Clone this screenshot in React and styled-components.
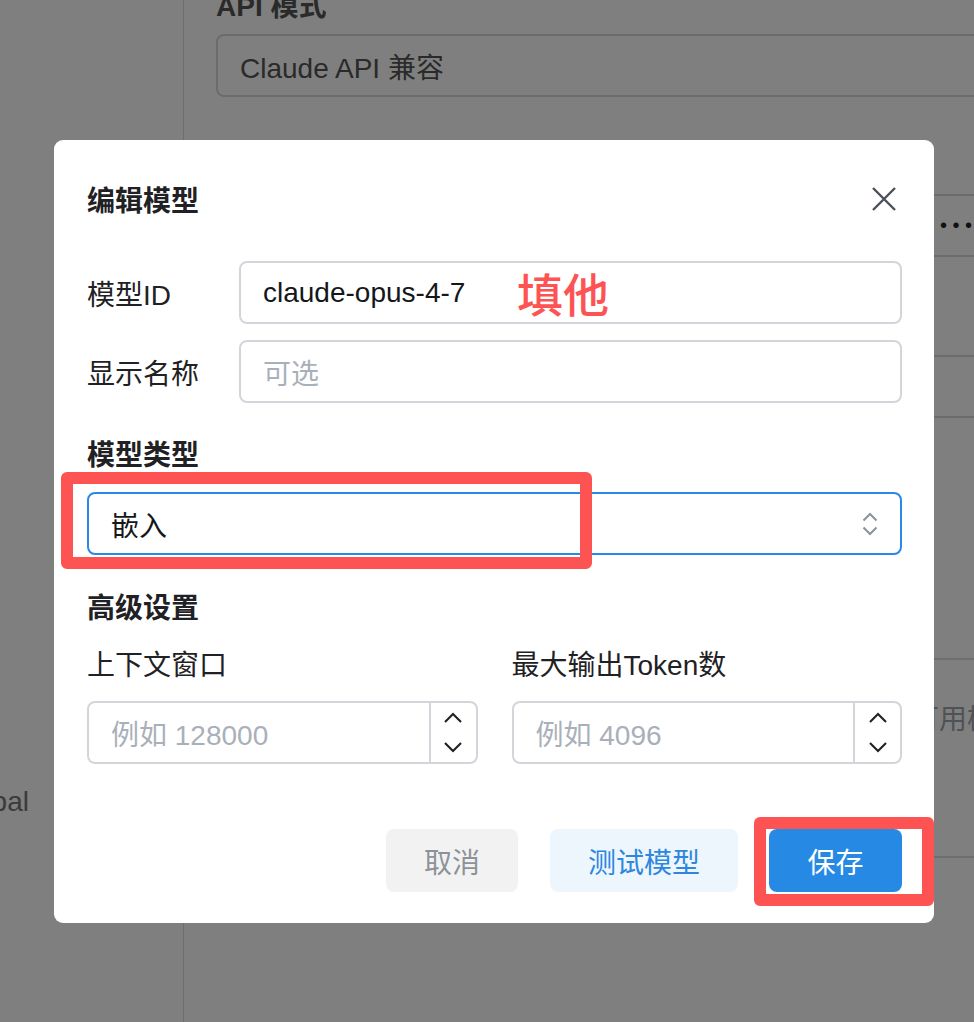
import React from 'react'
import styled, { createGlobalStyle } from 'styled-components'

const GlobalStyle = createGlobalStyle`
  html, body {
    margin: 0;
    padding: 0;
    height: 100%;
    overflow: hidden;
    background: #ffffff;
    font-family: 'Liberation Sans', 'Noto Sans CJK SC', sans-serif;
    color: #1f2124;
  }
  * {
    box-sizing: border-box;
  }
`

// settings page behind the modal
const Page = styled.div`
  display: grid;
  grid-template-columns: 184px 1fr;
  height: 1022px;
  overflow: hidden;
`
const Sidebar = styled.nav`
  border-right: 1px solid #dcdcdc;
  padding-top: 782px;
  overflow: hidden;
`
const NavItem = styled.div`
  margin-left: -52px;
  line-height: 40px;
  font-size: 28px;
  color: #777;
  white-space: nowrap;
`
const Main = styled.section`
  padding-left: 32px;
  overflow: hidden;
`
const PageLabel = styled.div`
  margin-top: -13px;
  line-height: 40px;
  font-size: 28px;
  font-weight: 700;
  color: #555;
`
const PageBox = styled.div`
  width: calc(100% + 40px);
  height: 63px;
  margin-top: ${(p) => p.$gap}px;
  border: 2px solid #d8d8d8;
  border-radius: 8px;
  display: flex;
  align-items: center;
  padding-left: 22px;
  font-size: 28px;
  color: #555;
  white-space: nowrap;
  overflow: hidden;
`
const Dots = styled.span`
  font-size: 20px;
  letter-spacing: 5.5px;
  color: #222;
`
const PageSection = styled.div`
  width: calc(100% + 40px);
  height: 200px;
  margin-top: 240px;
  border-top: 2px solid #dcdcdc;
  border-bottom: 2px solid #dcdcdc;
  padding: 40px 0 0 695px;
  font-size: 28px;
  line-height: 40px;
  color: #9ea4ab;
  white-space: nowrap;
`

// modal
const Overlay = styled.div`
  position: fixed;
  inset: 0;
  background: rgba(0, 0, 0, 0.5);
  padding: 140px 40px 0 54px;
`
const Dialog = styled.div`
  position: relative;
  width: 880px;
  background: #fff;
  border-radius: 9px;
  padding: 38px 32px 31px 33px;
  display: flex;
  flex-direction: column;
`
const Header = styled.div`
  display: flex;
  align-items: center;
  justify-content: space-between;
  height: 42px;
`
const Title = styled.h2`
  margin: 0;
  font-size: 28px;
  font-weight: 700;
  color: #1f2124;
`
const CloseButton = styled.button`
  width: 36px;
  height: 36px;
  border: 0;
  padding: 0;
  background: transparent;
  display: flex;
  align-items: center;
  justify-content: center;
`
const Rows = styled.div`
  margin-top: 41px;
  display: flex;
  flex-direction: column;
  gap: 16px;
`
const Row = styled.div`
  display: flex;
  align-items: center;
`
const RowLabel = styled.label`
  width: 152px;
  flex-shrink: 0;
  font-size: 28px;
  color: #1f2124;
`
const InputWrap = styled.div`
  position: relative;
  flex: 1;
`
const TextInput = styled.div`
  height: 63px;
  border: 2px solid #d2d6db;
  border-radius: 8px;
  display: flex;
  align-items: center;
  padding-left: 22px;
  font-size: 28px;
  color: ${(p) => (p.$placeholder ? '#a9b0b9' : '#15171a')};
`
const Note = styled.span`
  position: absolute;
  left: 278px;
  top: 50%;
  transform: translateY(-52%);
  font-size: 46px;
  font-weight: 500;
  color: #fd5353;
  pointer-events: none;
`
const SectionTitle = styled.div`
  margin-top: ${(p) => p.$gap}px;
  line-height: 40px;
  font-size: 28px;
  font-weight: 700;
  color: #1f2124;
`
const SelectWrap = styled.div`
  position: relative;
  margin-top: 16px;
`
const Select = styled.div`
  height: 63px;
  border: 2px solid #2889e6;
  border-radius: 8px;
  display: flex;
  align-items: center;
  justify-content: space-between;
  padding: 0 22px;
  font-size: 28px;
  color: #15171a;
`
const RedFrame = styled.div`
  position: absolute;
  left: ${(p) => p.$x}px;
  top: ${(p) => p.$y}px;
  width: ${(p) => p.$w}px;
  height: ${(p) => p.$h}px;
  border: 12px solid #fd5353;
  border-radius: 6px;
  pointer-events: none;
`
const Grid = styled.div`
  margin-top: 17px;
  display: grid;
  grid-template-columns: 1fr 1fr;
  column-gap: 34px;
`
const Field = styled.div`
  display: flex;
  flex-direction: column;
  gap: 15px;
`
const FieldLabel = styled.div`
  line-height: 40px;
  font-size: 28px;
  color: #1f2124;
`
const NumberField = styled.div`
  height: 63px;
  border: 2px solid #d2d6db;
  border-radius: 8px;
  display: flex;
  overflow: hidden;
`
const NumberValue = styled.div`
  flex: 1;
  display: flex;
  align-items: center;
  padding-left: 22px;
  font-size: 28px;
  color: #a9b0b9;
`
const Spinner = styled.div`
  width: 47px;
  border-left: 2px solid #d2d6db;
  display: flex;
  flex-direction: column;
`
const SpinHalf = styled.div`
  flex: 1;
  display: flex;
  align-items: center;
  justify-content: center;
`
const Footer = styled.div`
  margin-top: 65px;
  display: flex;
  justify-content: flex-end;
  gap: 32px;
`
const Button = styled.button`
  height: 63px;
  width: ${(p) => p.$w}px;
  border: 0;
  border-radius: 8px;
  font-family: inherit;
  font-size: 28px;
  background: ${(p) => (p.$variant === 'primary' ? '#268ae5' : p.$variant === 'soft' ? '#edf5fd' : '#f2f2f3')};
  color: ${(p) => (p.$variant === 'primary' ? '#ffffff' : p.$variant === 'soft' ? '#2d87de' : '#8d9298')};
`
const SaveWrap = styled.div`
  position: relative;
  margin-left: -1px;
`

function Chevron({ up }) {
  return (
    <svg width="20" height="11" viewBox="0 0 20 11" fill="none">
      <path
        d={up ? 'M2 10L10 2L18 10' : 'M2 1L10 9L18 1'}
        stroke="#1f2124"
        strokeWidth="2.1"
      />
    </svg>
  )
}

function NumberInput({ placeholder }) {
  return (
    <NumberField>
      <NumberValue>{placeholder}</NumberValue>
      <Spinner>
        <SpinHalf>
          <Chevron up />
        </SpinHalf>
        <SpinHalf>
          <Chevron />
        </SpinHalf>
      </Spinner>
    </NumberField>
  )
}

export default function App() {
  return (
    <>
      <GlobalStyle />
      <Page>
        <Sidebar>
          <NavItem>Global</NavItem>
        </Sidebar>
        <Main>
          <PageLabel>API 模式</PageLabel>
          <PageBox $gap={7}>Claude API 兼容</PageBox>
          <PageBox $gap={97}>
            <Dots>{'•'.repeat(80)}</Dots>
          </PageBox>
          <PageBox $gap={98} />
          <PageSection>可用模型列表</PageSection>
        </Main>
      </Page>

      <Overlay>
        <Dialog>
          <Header>
            <Title>编辑模型</Title>
            <CloseButton aria-label="关闭">
              <svg width="24" height="24" viewBox="0 0 24 24" fill="none">
                <path d="M1 1L23 23M23 1L1 23" stroke="#4a5159" strokeWidth="2.4" />
              </svg>
            </CloseButton>
          </Header>

          <Rows>
            <Row>
              <RowLabel>模型ID</RowLabel>
              <InputWrap>
                <TextInput>claude-opus-4-7</TextInput>
                <Note>填他</Note>
              </InputWrap>
            </Row>
            <Row>
              <RowLabel>显示名称</RowLabel>
              <InputWrap>
                <TextInput $placeholder>可选</TextInput>
              </InputWrap>
            </Row>
          </Rows>

          <SectionTitle $gap={33}>模型类型</SectionTitle>
          <SelectWrap>
            <Select>
              <span>嵌入</span>
              <svg width="16" height="24" viewBox="0 0 16 24" fill="none">
                <path d="M1.5 8.5L8 2L14.5 8.5M1.5 15.5L8 22L14.5 15.5" stroke="#8a929b" strokeWidth="2" />
              </svg>
            </Select>
            <RedFrame $x={-26} $y={-20} $w={531} $h={97} />
          </SelectWrap>

          <SectionTitle $gap={34}>高级设置</SectionTitle>
          <Grid>
            <Field>
              <FieldLabel>上下文窗口</FieldLabel>
              <NumberInput placeholder="例如 128000" />
            </Field>
            <Field>
              <FieldLabel>最大输出Token数</FieldLabel>
              <NumberInput placeholder="例如 4096" />
            </Field>
          </Grid>

          <Footer>
            <Button $w={132}>取消</Button>
            <Button $w={188} $variant="soft">测试模型</Button>
            <SaveWrap>
              <Button $w={133} $variant="primary">保存</Button>
              <RedFrame $x={-15} $y={-12} $w={180} $h={89} />
            </SaveWrap>
          </Footer>
        </Dialog>
      </Overlay>
    </>
  )
}
